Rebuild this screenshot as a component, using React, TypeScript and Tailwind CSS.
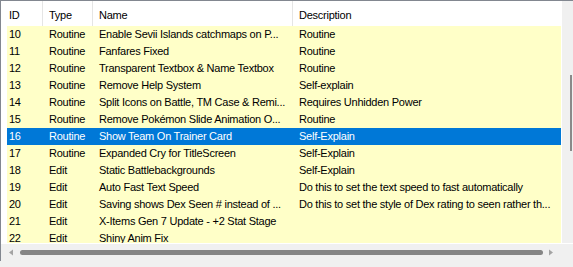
import React from "react";

const rows = [
  { id: "10", type: "Routine", name: "Enable Sevii Islands catchmaps on P...", desc: "Routine" },
  { id: "11", type: "Routine", name: "Fanfares Fixed", desc: "Routine" },
  { id: "12", type: "Routine", name: "Transparent Textbox & Name Textbox", desc: "Routine" },
  { id: "13", type: "Routine", name: "Remove Help System", desc: "Self-explain" },
  { id: "14", type: "Routine", name: "Split Icons on Battle, TM Case & Remi...", desc: "Requires Unhidden Power" },
  { id: "15", type: "Routine", name: "Remove Pokémon Slide Animation O...", desc: "Routine" },
  { id: "16", type: "Routine", name: "Show Team On Trainer Card", desc: "Self-Explain" },
  { id: "17", type: "Routine", name: "Expanded Cry for TitleScreen", desc: "Self-Explain" },
  { id: "18", type: "Edit", name: "Static Battlebackgrounds", desc: "Self-Explain" },
  { id: "19", type: "Edit", name: "Auto Fast Text Speed", desc: "Do this to set the text speed to fast automatically" },
  { id: "20", type: "Edit", name: "Saving shows Dex Seen # instead of ...", desc: "Do this to set the style of Dex rating to seen rather th..." },
  { id: "21", type: "Edit", name: "X-Items Gen 7 Update - +2 Stat Stage", desc: "" },
  { id: "22", type: "Edit", name: "Shiny Anim Fix", desc: "" },
];

const selected = "16";

export default function App() {
  return (
    <div
      className="w-[573px] h-[267px] bg-[#f0f0f0] overflow-hidden text-[11px] tracking-[-0.25px] text-black"
      style={{ fontFamily: '"Liberation Sans", Arial, sans-serif' }}
    >
      <div className="w-[620px] h-[261px] border border-[#828790] bg-white flex flex-col">
        <div className="flex h-[242px]">
          {/* list area */}
          <div className="w-[560px] h-full overflow-hidden flex flex-col">
            <div className="grid grid-cols-[42px_50px_200px_300px] h-[25px] shrink-0 bg-white">
              <div className="pl-[8px] pt-[3px] flex items-center border-r border-[#e5e5e5]">ID</div>
              <div className="pl-[6px] pt-[3px] flex items-center border-r border-[#e5e5e5]">Type</div>
              <div className="pl-[6px] pt-[3px] flex items-center border-r border-[#e5e5e5]">Name</div>
              <div className="pl-[6px] pt-[3px] flex items-center">Description</div>
            </div>
            <div className="flex flex-col">
              {rows.map((r) => (
                <div
                  key={r.id}
                  className={`ml-[6px] w-[600px] h-[17px] shrink-0 grid grid-cols-[36px_50px_200px_314px] items-center whitespace-nowrap leading-[17px] ${
                    r.id === selected ? "bg-[#0078d7] text-white" : "bg-[#ffffc8]"
                  }`}
                >
                  <div className="pl-[2px]">{r.id}</div>
                  <div className="pl-[6px]">{r.type}</div>
                  <div className="pl-[6px]">{r.name}</div>
                  <div className="pl-[6px]">{r.desc}</div>
                </div>
              ))}
            </div>
          </div>
          {/* vertical scrollbar */}
          <div className="w-[17px] h-full bg-[#f0f0f0] ml-px pt-[74px] flex justify-center shrink-0">
            <div className="w-[2px] h-[76px] bg-[#8a8a8a]" />
          </div>
        </div>
        {/* horizontal scrollbar */}
        <div className="flex h-[17px] bg-[#f0f0f0] mt-px">
          <div className="w-[560px] flex items-center">
            <svg width="18" height="17" viewBox="0 0 18 17" className="shrink-0">
              <polygon points="8,8.5 12,5.5 12,11.5" fill="#a3a3a3" />
            </svg>
            <div className="ml-[1px] w-[523px] h-[5px] rounded-full bg-[#858585]" />
            <svg width="18" height="17" viewBox="0 0 18 17" className="shrink-0">
              <polygon points="10,8.5 6,5.5 6,11.5" fill="#a3a3a3" />
            </svg>
          </div>
        </div>
      </div>
    </div>
  );
}
